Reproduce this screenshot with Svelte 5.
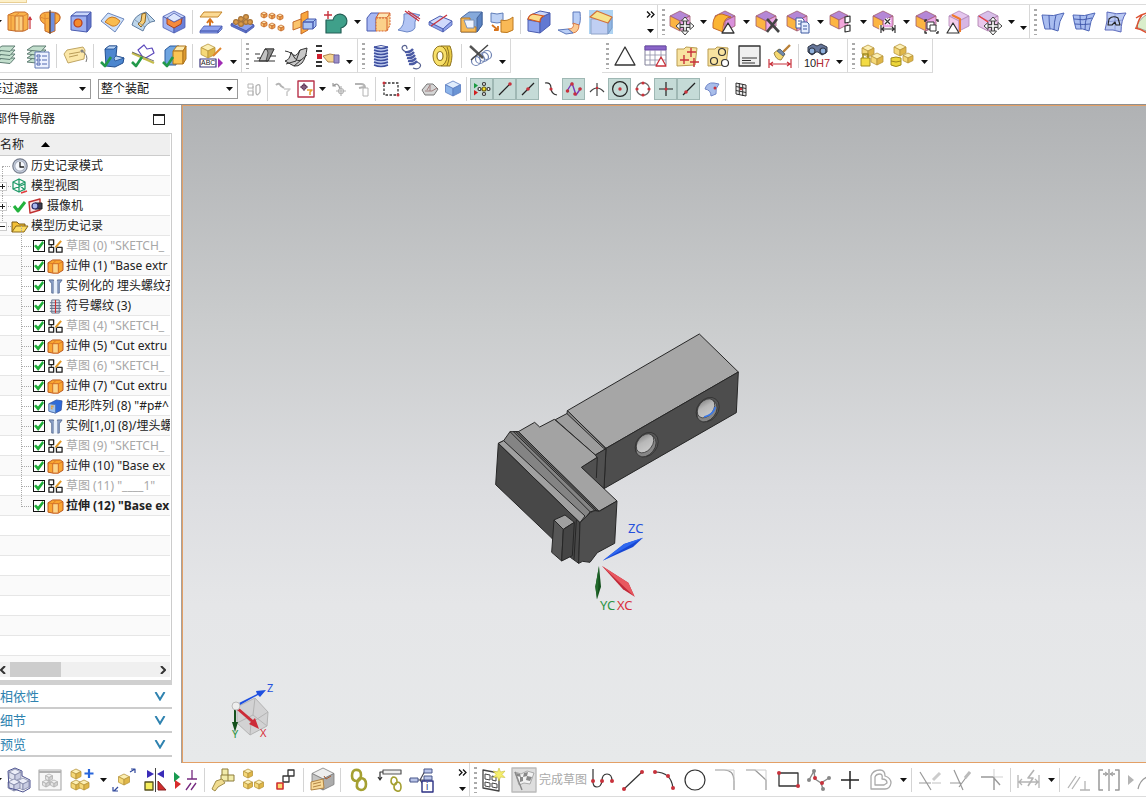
<script>
  const ink = '#333'
  const gray = '#b4b4b4'
  const red = '#c8323c'
  const navy = '#4a5cb0'
  const rust = '#c46a2a'

  // every icon is a list of [path, fill, stroke, stroke width]
  const line = (d, stroke = ink, w = 1.2) => [d, 'none', stroke, w]
  const dot = (x, y, r, fill = red, stroke = 'none') => [
    `M${x - r} ${y}a${r} ${r} 0 1 0 ${2 * r} 0a${r} ${r} 0 1 0 ${-2 * r} 0z`,
    fill,
    stroke,
    1.2
  ]
  const cube = (x, y, s, top, left, right, edge) => [
    [`M${x} ${y}l${s} ${s / 2}l${-s} ${s / 2}l${-s} ${-s / 2}z`, top, edge, 0.8],
    [`M${x - s} ${y + s / 2}l${s} ${s / 2}v${s}l${-s} ${-s / 2}z`, left, edge, 0.8],
    [`M${x + s} ${y + s / 2}l${-s} ${s / 2}v${s}l${s} ${-s / 2}z`, right, edge, 0.8]
  ]
  const blueCube = (x, y, s) => cube(x, y, s, '#c9d6fa', '#a3b5f2', '#6b80d8', navy)
  const orangeCube = (x, y, s) => cube(x, y, s, '#fde6b4', '#fbc878', '#f0a050', rust)
  const yellowCube = (x, y, s) => cube(x, y, s, '#fcefb4', '#f5d878', '#dfb648', '#b8963c')
  const syncCube = cube(11, 1, 10, '#b487d6', '#fcb542', '#eba6e6', '#a05a70')
  const paleCube = cube(11, 1, 10, '#d8bfea', '#eac8ec', '#f0c9ee', '#a87aa8')
  const move = [
    line('M16 9v14M9 16h14', '#444', 4),
    line('M16 10v12M10 16h12', '#fff', 1.6),
    ['M16 7l3.500 4h-7zM16 25l3.500-4h-7zM7 16l4-3.500v7zM25 16l-4-3.500v7z', '#fff', '#444', 1]
  ]
  const check = line('M1 18l4 4 6-9', '#22994a', 2.6)
  const layers = [16, 12, 8, 4].map(y => [
    `M1 ${y + 2}l6-4h13l-5 5.500z`,
    '#c3dfcd',
    '#5f7d73',
    1
  ])
  const folder = ['M2 5h7l2-2 11 1-2 17-18 1z', '#f8e3a0', '#b99c50', 1]

  const icons = {
    extrude: [
      ['M1 5l7-3h10l3 2v15l-4 2H8l-7-1z', '#f9b34b', rust, 1],
      ['M8 6h8v15H8z', '#fcd083', rust, 1],
      line('M1 5l7 1 4-3M16 6l5-2M4 6v14M12 7v13', '#e08a35', 1),
      line('M23 7v12M21.500 10L23 7l1.500 3', red)
    ],
    revolve: [
      ['M12 2Q2 2 2 7q0 5 5 7v7l5 2z', '#f9ad42', rust, 1],
      ['M12 2q10 0 10 5 0 5-5 7v7l-5 2z', '#6d8fdf', rust, 1],
      ['M17 3q5 1 5 4 0 5-5 7z', '#f9ad42', rust, 1],
      line('M7 4v15M2 7q5 3 10 1', '#e08a35', 1),
      line('M12 0v24', ink, 1)
    ],
    block: [
      ['M2 6l5-4h15l-4 4z', '#c9d6fa', navy, 1],
      ['M2 6h16v16L2 20z', '#9daff0', navy, 1],
      ['M18 6l4-4v15l-4 5z', '#6478cc', navy, 1],
      dot(9, 13, 4, '#f58a2c', '#b63c1c')
    ],
    emboss: [
      ['M1 11l7-8 16 6-9 13z', '#cfe1fa', '#6d88bd', 1],
      ['M5 12q3-5 7-5t8 4q-3 6-8 5z', '#f9bb4e', '#c97820', 1]
    ],
    bend: [
      ['M1 15q2-10 14-13l9 9q-9 1-12 10z', '#bed6ea', '#607da0', 1],
      ['M11 4l4-1-1 9-4 5-3-3 3-3z', '#f8ce77', '#8b6420', 1],
      line('M4 10l10 7M15 3l4 10', '#7892ad', 0.8)
    ],
    pocket: [
      ...blueCube(12, 1, 11),
      ['M5 8l7 4 8-4-1 6-7 4-7-4z', '#f58a3c', '#a84020', 1],
      ['M5 8l7-5 8 5-8 4z', '#dde7fd', navy, 0.8]
    ],
    offset: [
      ['M5 2h18l-4 5H1z', '#fbd992', '#c4862a', 1],
      line('M11 19v-9M8 13l3-4 3 4', '#d8741c', 2),
      ['M5 16h18l-4 5H1zM1 21h18v2H1zM19 21l4-5v3l-4 4z', '#8ea2ee', navy, 0.8]
    ],
    pattern: [
      ['M1 14l8-4 15 5-8 6z', '#8ea2ee', navy, 1],
      ['M1 14v2l15 7v-2zM16 23l8-6v-2l-8 6z', '#5f74cc', navy, 0.8],
      ...[[6, 12], [11, 9], [16, 7], [11, 14], [16, 12], [20, 12]].map(([x, y]) =>
        dot(x, y, 2.4, '#d99a4a', '#a87438')
      )
    ],
    array: [[3, 2], [11, 3], [19, 4], [3, 11], [11, 13], [20, 15]].flatMap(([x, y]) =>
      orangeCube(x, y, 3)
    ),
    mirror: [
      ['M9 4l7-3v19l-7 4z', '#f9a63c', rust, 1],
      ['M1 12l8-3v8l-8 3z', '#fbc46c', rust, 1],
      ['M11 12l4-3h9l-3 3zM11 12h10v7H11zM21 12l3-3v7l-3 3z', '#a8c3f5', navy, 1]
    ],
    unite: [
      ['M3 10h7a7 7 0 1 1 8 8v5H3z', '#3fa08a', '#245f56', 1.2],
      line('M5 1v8M1 5h8', red, 1.4)
    ],
    trim: [
      ['M1 8l4-5h8l-3 5v13H1z', '#a9b9f3', navy, 1],
      ['M10 8l3-5h11l-3 5z', '#fde6b4', '#d6612a', 1],
      ['M10 8h11l3-5v12l-3 6H10z', '#fbd18a', 'none', 0],
      ['M10 8h11l3-5v12l-3 6H10z', 'none', '#d6612a', 1, '2 1'],
      line('M21 8v13', '#d6612a', 1)
    ],
    cutSheet: [
      ['M7 4q9-2 16 1-6 4-5 10t-8 7L1 20q7-3 6-16z', '#b3c5f4', '#6b86c6', 1],
      line('M8 1l14 10M11 1l12 8', red, 1.2)
    ],
    split: [
      ['M1 12l11-6 12 5-9 8z', '#cfdafb', navy, 1],
      ['M1 12v3l14 7v-3zM15 22l9-7v-4l-9 8z', '#92a7ec', navy, 0.8],
      line('M3 16L19 5', red, 1.3)
    ],
    shell: [
      ['M2 8l8-6h13v13l-5 7H2z', '#85a9db', '#4d6ea8', 1],
      ['M18 8l5-6v13l-5 7z', '#5a83c3', '#45659a', 1],
      ['M2 8h9v6l-3 2 9 1v5H2z', '#f7ba56', '#b87824', 1],
      ['M5 10h10v8H8z', '#eef4ff', '#7b90b4', 1]
    ],
    wrap: [
      ['M1 3q6 2 12 0v9q-6 2-12 0z', '#bed2f5', '#5f7db8', 1],
      ['M11 10q6 2 12-3v13q-6 4-12 2z', '#f9b956', '#bd7920', 1],
      line('M2 15l6 5M8 16v4H4', '#d8741c', 1.8)
    ],
    blend: [
      ['M1 9v12l12 2V11z', '#90a5ee', navy, 1],
      ['M13 12q0-5 4-6l6-3v12l-10 8z', '#6279d2', navy, 1],
      ['M1 9q1-4 5-5l7-3 10 2-6 3q-4 1-4 6L1 10z', '#c9d6fa', navy, 1],
      ['M1 9q1-4 5-5l11 2q-4 1-4 6z', '#fbdc8b', '#d6551c', 1.2]
    ],
    bridge: [
      ['M15 2l7 0q1 10-1 13l-6-1z', '#b9cef6', '#5d78bb', 1],
      ['M10 19q7 0 5-6l6 2q0 7-6 8z', '#fbcb94', '#d87a48', 1],
      ['M0 20l10-1 5 4-7 1z', '#b9cef6', '#5d78bb', 1]
    ],
    chamferEdge: [
      ['M0 0h24v24H0z', '#aed3f2', 'none', 0],
      ['M2 9h17v15H2z', '#c0cff3', '#8fa3c8', 1],
      ['M19 13l4-6v11l-4 6z', '#8fb6e4', '#7d9ac6', 1],
      ['M1 7l7-6 15 6-4 6z', '#f6e48d', '#d2703a', 1.2]
    ],
    moveFace: [...syncCube, ...move],
    replaceFace: [
      ...cube(13, 1, 10, '#b487d6', '#f0b3ee', '#d991dc', '#a05a70'),
      ['M1 18v-5Q2 4 10 4l9 3q-7 0-8 10v5z', '#fbb433', rust, 1],
      ['M16 13l6 10H10z', '#fff', ink, 1.3]
    ],
    deleteFace: [...syncCube, line('M12 9l12 13M22 9L12 22', '#444', 2.6)],
    copyFace: [
      ...syncCube,
      ['M10 8h6l2 2v8h-8z', '#fff', '#3f5aa0', 1],
      ['M15 12h6l2 2v9h-8z', '#e7efff', '#3f5aa0', 1],
      line('M12 11h4M12 14h3M17 16h4M17 19h4', '#3f5aa0', 1)
    ],
    patternFace: [
      ...cube(10, 1, 9, '#b487d6', '#fcb542', '#f3a7dc', '#a05a70'),
      ['M16 7l5-1v6l-5 1zM16 16l5-1v6l-5 1z', '#fff', ink, 1.2]
    ],
    dimensionFace: [
      ...syncCube,
      line('M9 15v8M23 15v8M10 19h12M13 9l5 5M18 9l-5 5', '#fff', 3.4),
      line('M9 15v8M23 15v8M10 19h12M12 17l-2 2 2 2M20 17l2 2-2 2', ink, 1.2),
      line('M13 9l5 5M18 9l-5 5')
    ],
    groupFace: [
      ...syncCube,
      ['M12 12h7v7h-7z', '#fff', ink, 1],
      ['M15 15h6v6h-6z', '#fff', ink, 1],
      line('M10 12v-2h2M21 10h2v2M10 21v2h2M23 21v2h-2', ink, 1.4)
    ],
    offsetFace: [
      ...cube(13, 1, 10, '#e4c6ee', '#f3cdeb', '#d7b6e4', '#b087b8'),
      line('M6 5l8 4v13', '#f07a2c', 2),
      ['M7 13l6 10H1z', '#fff', ink, 1.2]
    ],
    moveEdge: [...paleCube, line('M2 6l9 6', '#e83c3c', 1.4), ...move],
    patch: [
      ['M1 5q12 2 22-2-5 8-6 18-6-3-13-2Q2 12 1 5z', '#a9bdf0', '#4e66b8', 1],
      line('M8 5q0 7 1 14M15 5q-2 7-2 15', '#3c54a8', 0.9)
    ],
    mesh: [
      ['M1 5q12 2 22-2-5 8-6 18-6-3-13-2Q2 12 1 5z', '#a9bdf0', '#4e66b8', 1],
      line('M8 5q0 7 1 14M15 5q-2 7-2 15M2 9q9 2 18-1M3 14q9 1 15 0', '#3c54a8', 0.9)
    ],
    loopSheet: [
      ['M4 2q10 3 19 1-5 7-5 19-8-3-16-2 3-9 2-18z', '#bac9f3', '#5a68bc', 1],
      line('M3 12l17-2M12 3v18', '#8090d0', 0.8),
      line('M5 15l1-6q4-4 9-1l2 7h-4l-1-3-3 3z', '#222', 1.1)
    ],
    sweep: [
      ['M2 17Q8 4 20 2l4 2-9 18z', '#d9eecb', '#888', 0.8],
      line('M2 8q8-6 20-6M1 18q6 1 12 5M8 5q-5 7-5 13', '#dc5030', 1.4)
    ],

    layers,
    layerList: [
      ...layers,
      ['M9 8h14v16H9z', '#edf2ff', '#6078b4', 1],
      line('M11 11h3v2h-3zM11 15h3v2h-3zM11 19h3v2h-3zM16 12h5M16 16h5M16 20h5', '#5068b0', 1)
    ],
    tag: [
      ['M1 10l3-4 16-3 2 3-1 9-16 4z', '#fbe7a8', '#c0a664', 1],
      line('M6 10l11-2M6 13l9-2', '#b99c58', 1),
      line('M19 7q7 4 4 11', '#777', 1),
      dot(19, 7, 1, '#fff', '#777')
    ],
    fixBlock: [
      ['M5 5l4-3h8l-1 10 8 2-1 5-8 4-9-1z', '#4c86cf', '#234f90', 1],
      ['M5 5l4-3h8l-3 3zM14 14l2-2 8 2-9 3z', '#b9d5f6', '#234f90', 0.8],
      check
    ],
    paintBlock: [
      ['M7 6l6-5 3 4 5-1 2 5-10 6z', '#fff', '#5b49bb', 1.2],
      line('M1 9l22 10', '#c4bc4c', 2.4),
      line('M1 8l22 9', '#555', 0.8),
      check
    ],
    checkBlocks: [
      ['M3 6l5-4h9l-3 4v15H3z', '#6ea4e0', '#2a5a9c', 1],
      ['M11 7l4-5h9l-3 5z', '#fdebb0', '#ae741c', 1],
      ['M11 7h10v13H11z', '#fbc453', '#ae741c', 1],
      ['M21 7l3-5v13l-3 5z', '#dc9a30', '#ae741c', 1],
      check
    ],
    annotate: [
      ...yellowCube(9, 0, 7),
      ['M1 15h16v8H1z', '#fff', '#3b357e', 1.2],
      ['M19 14l5 5-5 5z', '#a02cb4', 'none', 0],
      line('M14 12l8-8', '#e0852c', 2)
    ],
    section: [
      ['M6 17l6-12h9l-6 12z', '#c2c2c2', '#333', 1],
      ['M12 5q3 0 3 4l-2 8h2l6-12z', '#8d8d8d', '#333', 0.8],
      line('M2 10h5M1 17h21M17 12h6M4 14h4', '#333', 1.2)
    ],
    sectionCurve: [
      ['M1 17q5-1 6-9 4 8 9-2l7-2q-1 10-5 15-4 4-8 3z', '#c8c8c8', '#333', 1],
      line('M1 7q7 1 9 6 3 5 7 3M2 20l10-3 4-11M10 22l7-6 6-5', '#333', 1)
    ],
    handPick: [
      line('M1 2h6M1 7h6M1 18h6M1 22h6', ink, 2),
      ['M2 10h5v5H2z', '#d02030', 'none', 0],
      ['M8 12l7-2 5 1v7h-7z', '#f5d48f', '#ad8650', 1],
      ['M19 11h5v8h-5z', '#9c8fc8', '#6c60a0', 1]
    ],
    spring: [
      ['M5 3h14v19H5z', '#c6d2f2', 'none', 0],
      ...[3, 6, 9, 12, 15, 18, 21].map(y => line(`M5 ${y}q7 3 14 0`, '#3f50a0', 1.4)),
      line('M5 3q7-3 14 0', '#3f50a0', 1)
    ],
    coil: [
      line('M7 5Q7 0 3 2q-3 3 3 6M17 18q5 2 3 5t-7 1', '#55608f', 1.2),
      ...[6, 9, 12, 15, 18].map((y, i) => line(`M${5 + i} ${y + 2}q5 1 8-3`, '#4a5aa4', 2.2))
    ],
    ring: [
      ['M10 2h9q4 9 0 20h-9z', '#e9cc46', '#8f7421', 1],
      ['M2 12a7 10 0 1 0 14 0a7 10 0 1 0-14 0z', '#f8e06a', '#8f7421', 1],
      ['M6 12a3 4.500 0 1 0 6 0a3 4.500 0 1 0-6 0z', '#fff', '#8f7421', 1.2],
      line('M16 3q4 9 0 19', '#8f7421', 1)
    ],
    springTools: [
      ...[[8, 17], [12, 15], [16, 13], [19, 11]].map(([x, y]) => dot(x, y, 4.5, 'none', '#7084b4')),
      line('M2 2l13 12', '#555', 2.4),
      line('M20 1L3 16', '#444', 1.4)
    ],
    triangle: [['M12 3l10 18H2z', 'none', ink, 1.3]],
    table: [
      ['M1 2h21v19H1z', '#fff', '#808098', 1],
      ['M1 2h21v4H1z', '#8a65c8', '#6a4ba8', 1],
      line('M1 11h21M1 16h21M6 6v15M11 6v15M17 6v15', '#9090a8', 0.8),
      ['M17 13l5 9H12z', '#fff', red, 1.3]
    ],
    folderPoints: [folder, line('M16 4v9M12 8h9M9 11v9M5 16h9M19 14v9M15 18h9', red, 1.4)],
    folderRings: [
      folder,
      dot(16, 8, 3.5, 'none', ink),
      dot(8, 17, 3.5, 'none', ink),
      dot(19, 19, 3.5, '#fff', ink)
    ],
    note: [['M2 2h21v20H2z', '#efefef', ink, 1.3], line('M5 14h15M5 16.500h9M5 19h13', ink, 1)],
    brush: [
      line('M22 1l-7 7', '#b98038', 2.4),
      ['M6 9l5-4 6 5-4 6q-5 0-7-7z', '#f5d870', '#9a8544', 1],
      ['M12 5l5 5-2 2-6-5z', '#7088a8', '#4d6078', 0.8],
      line('M1 15v9M23 15v9M2 20h20M5 18l-3 2 3 2M19 18l3 2-3 2', red, 1.2)
    ],
    fits: [
      ['M3 3l5-3 4 2 4-2 6 3v5l-5 3-4-3h-2l-4 3-4-3z', '#66769a', '#303848', 1],
      dot(7, 7, 3, '#8fb0dc', '#303848'),
      dot(18, 7, 3, '#8fb0dc', '#303848')
    ],
    lockBoxes: [
      ...yellowCube(9, 1, 6),
      ...yellowCube(18, 9, 6),
      ['M2 14h9v8H2z', '#f3db44', '#a08a20', 1],
      line('M4 14v-4h5v4', '#a08a20', 1.6)
    ],
    stackBoxes: [
      ...yellowCube(10, 0, 6),
      ...yellowCube(18, 9, 5),
      ['M1 14q5-2 10 0v7q-5 3-10 0z', '#ecd53a', '#a08a20', 1],
      line('M1 17q5 2 10 0', '#a08a20', 1)
    ],

    assembly: [
      ...cube(8, 1, 6, '#eceef8', '#dee1ee', '#c8cce2', '#7e84a4'),
      ...cube(16, 10, 6, '#eceef8', '#dee1ee', '#c8cce2', '#7e84a4'),
      ...cube(7, 11, 6, '#eceef8', '#dee1ee', '#c8cce2', '#7e84a4'),
      line('M1 3l7-3 7 3v5l8 4v8l-7 4-6-2-8-2z', '#4c5290', 1)
    ],
    assemblyView: [
      ['M1 2h22v20H1z', '#f6f6f6', '#b0b0b0', 1.2],
      line('M1 4h22', '#b0b0b0', 2),
      ...cube(11, 6, 3.5, '#f2f2f2', '#e4e4e4', '#d0d0d0', '#b0b0b0'),
      ...cube(8, 12, 3.5, '#f2f2f2', '#e4e4e4', '#d0d0d0', '#b0b0b0'),
      ...cube(16, 12, 3.5, '#f2f2f2', '#e4e4e4', '#d0d0d0', '#b0b0b0')
    ],
    addComponent: [
      ...yellowCube(7, 1, 5),
      ...yellowCube(7, 12, 5),
      ...yellowCube(15, 12, 5),
      line('M20 1v9M15.500 5.500h9', '#2866dc', 2.2)
    ],
    moveComponent: [
      ...yellowCube(12, 6, 5.5),
      line('M18 4l5-3M19 1h4v4M6 19l-4 4M1 19v4h5', '#30489c', 1.2)
    ],
    mirrorComponent: [
      ['M4 2l7 4-7 4zM21 2l-7 4 7 4z', '#3a2cb8', 'none', 0],
      line('M12.500 0v24', '#444', 1),
      ['M2 14h8v8H2z', '#f5ee5c', '#55501c', 1.3],
      ['M15 13l8 9h-8z', '#d02c2c', '#882020', 1]
    ],
    constraints: [
      ['M0 4l6 5-6 5z', '#189a50', 'none', 0],
      ['M1 12l6 4-6 5z', '#d82c2c', 'none', 0],
      line('M18 2v9M13 11h10M12 22l5-7M17 22l5-7', '#762a80', 1.3)
    ],
    joint: [
      ['M11 1h6v6h6v6h-13V7h1z', '#f2ecaa', '#8c7d3a', 1],
      line('M11 7h6v6', '#8c7d3a', 1),
      ['M1 21l4-8 6-2 3 4-7 4-3 4z', '#f0dc90', '#a08c48', 1]
    ],
    componentPattern: [
      ...yellowCube(6, 1, 4.5),
      ...yellowCube(6, 12, 4.5),
      ...yellowCube(17, 12, 4.5)
    ],
    sequence: [
      ['M15 2h6v6h-6zM10 8h6v6h-6z', '#fff', ink, 1.3],
      ['M4 15h6v6H4z', '#fcd870', '#d03030', 1.6]
    ],
    assemblyBox: [
      ...cube(13, 0, 11, '#eeeeee', '#c4c4c4', '#acacac', '#7c7c7c'),
      ['M1 14l12-3 1 9-13 2z', '#f8d998', '#b08344', 1],
      line('M3 16l8-2M3 19l8-2', '#b08344', 1),
      line('M14 8l2 3 5-3', '#a85a2c', 1)
    ],
    chain: [
      ['M8 2q6-1 6 5t-4 6q-5 0-5-5t3-6z', 'none', '#a5a032', 2.6],
      ['M13 10q6 0 6 6t-5 6q-5-1-4-6t3-6z', 'none', '#a5a032', 2.6]
    ],
    linkPart: [
      ['M5 2h18v4H5z', '#eee', '#555', 1.2],
      line('M5 4H2v8M0 9l2 3 2-3', ink, 1.2),
      ['M15 9q4 0 4 4t-3 4q-3-1-3-4t2-4zM19 14q4 0 4 5t-4 4q-3-1-3-4t3-5z', 'none', '#a5a032', 1.6]
    ],
    assemblyInfo: [
      line('M0 12h11L16 3M11 12l5 7M11 12h5', '#445', 1.2),
      ['M1 10h8v4H1zM15 1h8v4h-8zM15 8h8v4h-8z', '#b9c4e8', '#48568a', 1],
      ['M13 13h11v11H13z', '#fff', '#2c3184', 1.4]
    ],
    sketch: [
      ['M2 2l16 3v18L2 20z', '#fff', '#444', 1.3],
      line('M4 6l5 1v5l-5-1zM11 8l4 1v4l-4-1zM4 14l5 1v4l-5-1zM11 15l5 1v4l-5-1z', '#444', 1),
      ['M18 0l1.500 4L24 3l-3 3.500 3 3-4.500-.5L18 13l-1.500-4-4.500.5 3-3-3-3.500 4.500 1z', '#f5ee6c', '#c8bc40', 0.6]
    ],
    finish: [
      ['M0 0h24v24H0z', '#dedede', '#bbb', 1.4],
      ['M3 4l6 2 6-3 7 2-4 11-6-1-5 2z', '#f2f2f2', '#999', 0.8],
      ['M4 5l4 1 1 3-4-1zM12 5l4-1-1 4-4 1zM8 9l3 0 0 4-3 1zM15 8l5 1-2 4-4-1z', '#888', 'none', 0],
      line('M3 4l7 18', '#888', 1.4)
    ],
    profile: [
      line('M3 1v13q0 5 4 5t5-6q0-7 5-7t5 7'),
      dot(3, 13, 2),
      dot(12, 13, 2),
      dot(22, 13, 2)
    ],
    line: [line('M3 21L21 4'), dot(3, 21, 2), dot(21, 4, 2)],
    arc: [line('M3 4q16 0 18 16'), dot(3, 4, 2), dot(16, 8, 2), dot(21, 20, 2)],
    circle: [dot(12, 12, 10, 'none', ink)],
    fillet: [line('M1 2h9q10 0 10 11v9', '#999', 1.2), line('M10 2h10v11', '#ccc', 1)],
    chamfer: [line('M1 2h9l11 10v10', '#999', 1.2), line('M10 2h11v10', '#ccc', 1)],
    rectangle: [line('M3 5h19v13H3z', ink, 1.3), dot(3, 5, 2), dot(22, 18, 2)],
    spline: [
      line('M2 12l5-9 1 8 6 4 8-5M14 15l2 6', '#888', 1.4),
      dot(2, 12, 2, '#888'),
      dot(7, 3, 2, '#888'),
      dot(8, 10, 2),
      dot(15, 15, 2),
      dot(16, 21, 2, '#888'),
      dot(22, 10, 2, '#888')
    ],
    point: [line('M12 3v18M3 12h18', '#222', 1.5)],
    offsetCurve: [
      line('M2 21V8q2-6 9-6 5 0 5 6 6 2 6 7-1 6-6 6z', '#aaa', 1.3),
      line('M6 17V9q1-3 5-3 3 0 2 5 5 0 5 4l-3 2z', '#aaa', 1.3)
    ],
    trimCurve: [
      line('M2 4l11 18M1 15h12', '#999'),
      line('M14 15h9', '#999', 0.6),
      line('M15 12l7-7', '#ccc', 3)
    ],
    extendCurve: [line('M5 2l9 20M1 15h11M10 19L21 4', '#999'), line('M16 10l5-6', '#bbb', 3)],
    makeCorner: [line('M1 9h12l7 8M14 9v13', '#999', 1.4), line('M14 1v8h9', '#bbb', 0.7)],
    rapidDimension: [
      line('M1 7v13M22 7v13M2 14h19M5 11l-3 3 3 3M18 11l3 3-3 3', gray, 1.3),
      line('M17 2l-6 8h5l-5 8', gray, 1.6)
    ],
    geometric: [line('M2 20L10 8M6 21l8-12', gray, 1.3), line('M19 13v9M14 22h10', gray, 1.3)],
    symmetric: [
      line('M6 2H2v20h4M18 2h4v20h-4M6 6h4M18 6h-4', '#999', 1.5),
      line('M12 1v22', '#777', 1),
      line('M8 4l3 2-3 2M16 4l-3 2 3 2', '#999', 1)
    ],
    more: [['M0 7l6 5-6 5z', gray, 'none', 0], line('M10 21q2-9 9-12h5', '#999', 1.2)]
  }

  // icons of the selection bar and the tree sit on a 16 unit grid
  const small = {
    related: [
      line('M2 3h5v4H2zM2 10h5v4H2zM7 5v10', gray, 1),
      line('M10 5q4-3 4 1v5q-3 5-4 1z', gray, 1.3)
    ],
    filterReset: [line('M1 4q3-3 5 1l3 2', gray, 2), line('M9 8h6l-3 3v4', '#ccc', 1.6)],
    filterPick: [
      ['M0 0h16v16H0z', '#fff', '#b8324a', 1.4],
      line('M6 2v8M2 6h8', '#5b2c50', 1),
      dot(6, 6, 2.2, 'none', '#5b2c50'),
      line('M9 9h5l-2 2v3', '#e6a030', 1.6)
    ],
    snapPoint: [
      line('M2 5q5-5 7 3M2 2v3h3', '#999', 1.2),
      line('M10 5v10M5 10h10', gray, 1.2),
      dot(10, 10, 2.5, 'none', gray)
    ],
    snapOrigin: [line('M1 3h6q4 0 4 4M5 7l5-1', gray, 2), line('M9 7h5v8H9z', gray, 1)],
    marquee: [
      ['M1 2h14v12H1z', 'none', ink, 1.3, '2.5 1.5'],
      dot(1, 2, 1.5),
      dot(15, 14, 1.5)
    ],
    solid: [
      ['M0 9l5-6h6l5 5-4 6H3z', '#d4d4d4', '#777', 1],
      line('M5 9l3-5M3 10h7l5-3M8 4v6', '#a08080', 1)
    ],
    face: cube(8, 0, 7.5, '#e0edfc', '#8cb4ea', '#6a94d4', '#5a7cc0'),
    allSnap: [
      ['M0 2l4 2.500-4 3z', '#1a9a40', 'none', 0],
      ['M0 9l4 2.500-4 3z', '#d02020', 'none', 0],
      ...[[10, 3], [10, 13], [5.5, 8], [14.5, 8]].map(([x, y]) => dot(x, y, 1.5, '#fff', ink)),
      dot(10, 8, 2, '#f5e020', '#706010')
    ],
    endpoint: [line('M2 14L13 3', '#222', 1.2), dot(13, 3, 1.8)],
    midpoint: [line('M2 14L14 2', '#222', 1.2), dot(8, 8, 1.8)],
    control: [line('M2 2q6-1 6 5t6 7', ink, 1.2), dot(8, 8, 1.6)],
    pole: [
      line('M1 10l5-8 4 12 5-7', '#7838b8', 1.4),
      dot(1.5, 10, 1.8),
      dot(6, 3, 1.8),
      dot(9, 13, 1.8),
      dot(14, 8, 1.8)
    ],
    intersection: [line('M1 11q7-8 14 0M8 2v13', '#444', 1.2), dot(8, 7, 1.2)],
    center: [dot(8, 8, 7.4, 'none', '#222'), dot(8, 8, 1.7)],
    quadrant: [
      dot(8, 8, 6.4, 'none', '#666'),
      dot(8, 2, 1.6),
      dot(8, 14, 1.6),
      dot(2, 8, 1.6),
      dot(14, 8, 1.6)
    ],
    existing: [line('M8 1v14M1 8h14', '#222', 1.2), dot(8, 8, 1.5)],
    onCurve: [line('M2 14L14 2', '#222', 1.2), dot(5, 11, 1.8)],
    onFace: [['M1 8q2-7 9-6l5 1q-4 4-3 10l-5 2q0-6-6-7z', '#a8bdea', '#7086c8', 1], dot(11, 7, 1.5)],
    snapGrid: [
      ['M3 2l10 2v11L3 13z', '#eee', ink, 1],
      line('M6.300 2v12M9.700 3v12M3 5.500l10 2M3 9.500l10 2', ink, 1),
      dot(8, 8, 1.3)
    ],

    clock: [
      dot(8, 8, 7.2, '#c9d2e3', '#767d8c'),
      dot(8, 8, 5.2, '#f5f8fd', '#a9b0be'),
      line('M8 4v5h4', '#222', 1.3)
    ],
    views: [
      line('M1 4l6-3 6 3v7l-6 3-6-3zM1 4l6 3 6-3M7 1v13M1 11l12-5M7 7l6 5', '#209a68', 1.3),
      line('M9 15l6-2', '#e23c3c', 1.6)
    ],
    camera: [
      ['M1 4l11-3v11L2 15z', '#fbe3e3', '#c03030', 1.4],
      ['M7 5h7v6H7z', '#3c3c50', '#222', 1],
      dot(7, 8, 3, '#a9b8ee', '#30306c')
    ],
    tick: [line('M2 8l4 5L13 4', '#23b23c', 3)],
    folder: [
      ['M0 14V4h5l2 2h6v3', '#f3bf35', '#7a5a14', 1],
      ['M0 14l4-6h12l-4 6z', '#fbdb62', '#8b6818', 1]
    ],
    sketchNode: [
      ['M1 1h5v5H1zM1 9h5v5H1zM9 9h6v5H9z', '#fff', '#222', 1.4],
      line('M8 9l6-7', '#e39a28', 2.2),
      line('M3.500 6v3', '#222', 1)
    ],
    extrudeNode: [
      ['M0 4l5-3h8l3 2v9l-5 3H5l-5-1z', '#f9a632', '#b8541a', 1],
      ['M5 5h6v10H5z', '#fcd48a', '#d06a24', 1],
      line('M5 5L0 4M11 5l5-2M5 5l3-3', '#d06a24', 0.8)
    ],
    holeNode: [
      ['M1 1h5v14H4V5zM15 1h-5v14h2V5z', '#8aa0c8', '#5a6e94', 1],
      ['M6 2h4v13H6z', '#e8f0fb', 'none', 0]
    ],
    threadNode: [
      ['M4 1h8v14H4z', '#dfe5ef', '#68748c', 1],
      line('M2 4h12M2 7h12M2 10h12M2 13h12', '#68748c', 1.2),
      line('M8 1v14', '#d03030', 1.2)
    ],
    arrayNode: [
      ['M1 5l8-4 6 1-1 10-6 3-7-2z', '#2f6ad8', '#274a9c', 0.8],
      ['M1 5l7 1v9l-7-2z', '#9fc4f2', '#5574a8', 0.8],
      ['M3 7h3v2H3zM6 11H3V9z', '#e8a03c', 'none', 0]
    ]
  }

  // '|' separator, 'v' drop-down arrow, 'w' arrow at the bar's foot, '»' overflow
  const modelBar = 'v extrude revolve block emboss bend pocket | offset pattern array mirror unite v trim cutSheet split shell wrap | blend bridge chamferEdge »'
  const syncBar = 'moveFace v replaceFace v deleteFace copyFace v patternFace v dimensionFace v groupFace offsetFace moveEdge v w'
  const surfaceBar = 'patch mesh loopSheet sweep'
  const layerBar = 'layers layerList | tag | fixBlock paintBlock checkBlocks | annotate w'
  const sectionBar = 'section sectionCurve handPick w'
  const springBar = 'spring coil ring | springTools w'
  const drawBar = 'triangle table folderPoints folderRings note brush | fits w'
  const boxBar = 'lockBoxes stackBoxes w'
  const assemblyBar = 'v assembly assemblyView addComponent v moveComponent mirrorComponent constraints | joint componentPattern sequence | assemblyBox | chain linkPart assemblyInfo »'
  const sketchBar = 'sketch finish profile line arc circle fillet chamfer rectangle spline point offsetCurve v | trimCurve extendCurve makeCorner | rapidDimension v | geometric symmetric more'
  const selectionBar = 'related | filterReset filterPick v snapPoint snapOrigin | marquee v | solid face | allSnap endpoint midpoint control pole intersection center quadrant existing onCurve onFace | snapGrid'

  const labels = { finish: '完成草图' }
  const iconText = {
    annotate: [[2, 21, 7, 'ABC', '#222']],
    fits: [[-1, 23, 11, '10', '#222'], [11, 23, 11, 'H7', '#b02a30']],
    assemblyInfo: [[17, 22, 10, 'i', '#2c3184']]
  }

  let snaps = {
    allSnap: true,
    endpoint: true,
    midpoint: true,
    pole: true,
    center: true,
    existing: true,
    onCurve: true
  }

  let features = [
    { icon: 'sketchNode', name: '草图 (0) "SKETCH_', dim: true, on: true },
    { icon: 'extrudeNode', name: '拉伸 (1) "Base extr', on: true },
    { icon: 'holeNode', name: '实例化的 埋头螺纹孔', on: true },
    { icon: 'threadNode', name: '符号螺纹 (3)', on: true },
    { icon: 'sketchNode', name: '草图 (4) "SKETCH_', dim: true, on: true },
    { icon: 'extrudeNode', name: '拉伸 (5) "Cut extru', on: true },
    { icon: 'sketchNode', name: '草图 (6) "SKETCH_', dim: true, on: true },
    { icon: 'extrudeNode', name: '拉伸 (7) "Cut extru', on: true },
    { icon: 'arrayNode', name: '矩形阵列 (8) "#p#^', on: true },
    { icon: 'holeNode', name: '实例[1,0] (8)/埋头螺', on: true },
    { icon: 'sketchNode', name: '草图 (9) "SKETCH_', dim: true, on: true },
    { icon: 'extrudeNode', name: '拉伸 (10) "Base ex', on: true },
    { icon: 'sketchNode', name: '草图 (11) "____1"', dim: true, on: true },
    { icon: 'extrudeNode', name: '拉伸 (12) "Base ex', bold: true, on: true }
  ]

  const sections = ['相依性', '细节', '预览']
</script>

{#snippet glyph(shapes, grid, texts = [])}
  <svg class="glyph" class:tiny={grid === 16} viewBox="0 0 {grid} {grid}" aria-hidden="true">
    {#each shapes as [d, fill, stroke, width, dash]}
      <path {d} {fill} {stroke} stroke-width={width} stroke-dasharray={dash} />
    {/each}
    {#each texts as [x, y, size, text, fill]}
      <text {x} {y} {fill} font-size={size}>{text}</text>
    {/each}
  </svg>
{/snippet}

{#snippet caret()}
  <svg class="caret" viewBox="0 0 7 4" aria-hidden="true"><path d="M0 0h7L3.500 4z" /></svg>
{/snippet}

{#snippet bar(items, grip = true)}
  <div class="bar" role="toolbar">
    {#if grip}<span class="grip"></span>{/if}
    {#each items.split(' ') as item}
      {#if item === '|'}
        <span class="sep"></span>
      {:else if item === 'v'}
        <button class="drop" aria-label="options">{@render caret()}</button>
      {:else if item === 'w'}
        <button class="drop foot" aria-label="toolbar options">{@render caret()}</button>
      {:else if item === '»'}
        <button class="overflow" aria-label="more tools">
          <svg class="chevrons" viewBox="0 0 9 7" aria-hidden="true">
            <path d="M1 .5l3 3-3 3M5 .5l3 3-3 3" />
          </svg>
          {@render caret()}
        </button>
      {:else}
        <button class="tool" aria-label={item}>
          {@render glyph(icons[item], 24, iconText[item])}
          {#if labels[item]}<span>{labels[item]}</span>{/if}
        </button>
      {/if}
    {/each}
  </div>
{/snippet}

<div class="app">
  <header>
    <div class="strip"><span></span></div>
    <div class="row">
      {@render bar(modelBar, false)}
      {@render bar(syncBar)}
      {@render bar(surfaceBar)}
    </div>
    <div class="row second">
      {@render bar(layerBar, false)}
      {@render bar(sectionBar)}
      {@render bar(springBar)}
      <span class="gap"></span>
      {@render bar(drawBar)}
      {@render bar(boxBar)}
    </div>
    <div class="selection">
      <label class="combo filter">
        <select aria-label="选择过滤器"><option>没有选择过滤器</option></select>
        {@render caret()}
      </label>
      <label class="combo scope">
        <select aria-label="选择范围"><option>整个装配</option></select>
        {@render caret()}
      </label>
      {#each selectionBar.split(' ') as item}
        {#if item === '|'}
          <span class="sep"></span>
        {:else if item === 'v'}
          <button class="drop" aria-label="options">{@render caret()}</button>
        {:else}
          <button
            class="snap"
            class:on={snaps[item]}
            aria-label={item}
            aria-pressed={!!snaps[item]}
            on:click={() => (snaps[item] = !snaps[item])}>
            {@render glyph(small[item], 16)}
          </button>
        {/if}
      {/each}
    </div>
  </header>

  <main>
    <aside>
      <div class="title">
        <h1>部件导航器</h1>
        <button aria-label="最大化"></button>
      </div>
      <div class="panel">
        <button class="head">
          名称
          <svg viewBox="0 0 9 5" aria-hidden="true"><path d="M0 5h9L4.500 0z" /></svg>
        </button>
        <ul class="tree">
          <li class="root">{@render glyph(small.clock, 16)}历史记录模式</li>
          <li class="root"><i class="plus"></i>{@render glyph(small.views, 16)}模型视图</li>
          <li class="root">
            <i class="plus"></i>{@render glyph(small.tick, 16)}{@render glyph(small.camera, 16)}摄像机
          </li>
          <li class="root last"><i></i>{@render glyph(small.folder, 16)}模型历史记录</li>
          {#each features as feature}
            <li class="feature">
              <label class:dim={feature.dim} class:bold={feature.bold}>
                <input type="checkbox" bind:checked={feature.on} />
                {@render glyph(small[feature.icon], 16)}
                {feature.name}
              </label>
            </li>
          {/each}
        </ul>
        <div class="scroll">
          <button aria-label="向左"><svg viewBox="0 0 6 8"><path d="M5 0L1 4l4 4" /></svg></button>
          <span></span>
          <button aria-label="向右"><svg viewBox="0 0 6 8"><path d="M1 0l4 4-4 4" /></svg></button>
        </div>
      </div>
      {#each sections as section}
        <button class="section">
          {section}
          <svg viewBox="0 0 12 9" aria-hidden="true"><path d="M1.500 0L6 7.500 10.500 0" /></svg>
        </button>
      {/each}
    </aside>

    <section class="viewport" aria-label="model view">
      <svg class="part" viewBox="0 0 280 300">
        <defs>
          <linearGradient id="bore" x1="0" x2="1" y1="0" y2="0.6">
            <stop offset="0" stop-color="#7c7c7c" />
            <stop offset="0.5" stop-color="#b8b8b8" />
            <stop offset="1" stop-color="#c8c8c8" />
          </linearGradient>
        </defs>
        <g transform="scale(0.33333)" stroke="#262626" stroke-width="3" stroke-linejoin="round">
          <path fill="#a6a6a6" d="M262 272L658 42l117 114-397 229z" />
          <path fill="#4d4d4d" d="M378 385l397-229-6 122-397 228z" />
          <path fill="#9d9d9d" d="M226 299l36-19 116 106-32 19z" />
          <path fill="#8a8a8a" d="M262 272l-1 9 109 103 8 2z" />
          <path fill="#505050" d="M346 405l32-19-6 120-68-64z" />
          <path fill="none" d="M352 412l-3 62M304 441l48-29" />
          <path fill="#a3a3a3" d="M115 335l49-28 15 14 44-23 123 107 5 7-47 30 107 101-55 31z" />
          <path fill="#848484" d="M55 370l16-8 19-27 25 0 241 238-14-1-12 4-23 30-9 3z" />
          <path fill="#a0a0a0" d="M55 370l16-8 244 226-15 20z" />
          <path fill="#6f6f6f" d="M100 335l15 0 241 238-11-1z" />
          <path fill="none" d="M90 335l242 242M108 335l243 238" />
          <path fill="#484848" d="M55 370l245 238-4 122-25-18-55-57L47 494z" />
          <path fill="#4f4f4f" d="M300 608l32-31 13-5 13 2 53-31-7 127-52 28-22 29-22-3-12 6z" />
          <path fill="none" d="M289 600l-7 118" />
          <path fill="#a0a0a0" d="M222 600l33-15 28 22-33 21z" />
          <path fill="#565656" d="M222 600l28 28-5 95-30-26z" />
          <path fill="#454545" d="M250 628l33-21-6 100-32 16z" />
        </g>
        <g transform="scale(0.33333)" stroke="#2c2c2c" stroke-width="2">
          <ellipse cx="500" cy="374" rx="31" ry="40" fill="#555" transform="rotate(38 500 374)" />
          <ellipse cx="498" cy="378" rx="26" ry="36" fill="#868686" transform="rotate(38 498 378)" />
          <ellipse cx="495" cy="370" rx="22" ry="32" fill="url(#bore)" transform="rotate(38 495 370)" />
          <ellipse cx="683" cy="269" rx="31" ry="40" fill="#555" transform="rotate(38 683 269)" />
          <ellipse cx="681" cy="273" rx="26" ry="36" fill="#868686" transform="rotate(38 681 273)" />
          <ellipse cx="678" cy="265" rx="22" ry="32" fill="url(#bore)" transform="rotate(38 678 265)" />
          <path fill="none" stroke="#3a78e8" stroke-width="5" d="M672 291q28-6 34-30" />
        </g>
        <g transform="scale(0.33333)">
          <path fill="#1747d4" d="M368 722l64-50 57-19-30 28z" />
          <path fill="#2f68f0" d="M368 722l64-50 57-19z" />
          <path fill="#c02838" d="M366 738l79 50 19 42-35-22z" />
          <path fill="#e85860" d="M366 738l79 50 19 42z" />
          <path fill="#14501c" d="M357 738l-11 62 5 38 12-38z" />
          <path fill="#226a2c" d="M357 738l-2 62-4 38-5-38z" />
        </g>
        <text x="148" y="213" fill="#2450dc">ZC</text>
        <text x="120" y="290" fill="#2e9444">YC</text>
        <text x="137" y="290" fill="#d8303c">XC</text>
      </svg>

      <svg class="triad" viewBox="0 0 50 60">
        <g fill="#d2d2d3" stroke="#b4b4b4" stroke-width="1">
          <path d="M9 25l18-9 13 14-1 14-17 9L9 41z" />
          <path fill="none" d="M9 41l16-8 14 11M25 33l2-17M22 53l1-12 17-11M23 41L9 25" />
        </g>
        <path fill="#1d4fe0" d="M11 21l18-9-1-3 10-1-6 7-2-2-18 10z" />
        <path fill="#cc2c38" d="M11 26l14 12 2-2 4 11-10-5 2-2L9 28z" />
        <path fill="#14501c" d="M6 27h2v13h2l-3 10-3-10h2z" />
        <circle cx="8" cy="24" r="4" fill="#eee" stroke="#bbb" />
        <text x="39" y="10" fill="#2450dc">Z</text>
        <text x="32" y="55" fill="#d8303c">X</text>
        <text x="4" y="56" fill="#2e9444">Y</text>
      </svg>
    </section>
  </main>

  <footer class="row">
    {@render bar(assemblyBar, false)}
    {@render bar(sketchBar)}
  </footer>
</div>

<style>
  :global(body) {
    margin: 0;
    overflow: hidden;
  }

  .app {
    display: flex;
    flex-direction: column;
    height: 100vh;
    background: #fff;
    color: #222;
    font-family: 'Noto Sans', 'Noto Sans CJK SC', sans-serif;
    font-size: 12px;
    line-height: 20px;
  }

  button {
    padding: 0;
    border: none;
    background: none;
    color: inherit;
    font: inherit;
  }

  svg {
    display: block;
    flex: none;
  }

  .glyph {
    width: 24px;
    height: 24px;
    overflow: visible;
    stroke-linejoin: round;
  }

  .glyph.tiny {
    width: 16px;
    height: 16px;
  }

  .glyph text {
    font-family: 'Liberation Sans', sans-serif;
  }

  .caret {
    width: 7px;
    height: 4px;
    fill: #111;
  }

  /* toolbars */
  .strip {
    height: 4px;
    border-bottom: 1px solid #dcdcdc;
  }

  .strip span {
    display: block;
    width: 26px;
    height: 2px;
    background: #fdf0c8;
    border-right: 1px solid #e9cf94;
    border-bottom: 1px solid #e9cf94;
  }

  .row {
    display: flex;
    height: 34px;
    overflow: hidden;
  }

  .bar {
    display: flex;
    flex: none;
    align-items: center;
    box-sizing: border-box;
    height: 34px;
    border-right: 1px solid #d8d8d8;
    border-bottom: 1px solid #dcdcdc;
  }

  .row > .bar:first-child {
    margin-left: -8px;
  }

  .row > .bar:last-child {
    flex: 1 0 auto;
  }

  .second > .bar {
    padding-right: 2px;
  }

  .second > .bar:last-child {
    flex: none;
  }

  .gap {
    width: 91px;
  }

  .grip {
    width: 3px;
    height: 26px;
    margin: 0 1px 0 4px;
    background: repeating-linear-gradient(#aaa 0 2px, #fff 2px 5px);
  }

  .sep {
    width: 1px;
    height: 24px;
    margin: 0 3px 0 2px;
    background: #d4d4d4;
  }

  .tool {
    display: flex;
    align-items: center;
    padding: 0 4px 0 3px;
    color: #aaa;
  }

  .tool span {
    margin: 0 -4px 0 3px;
  }

  .drop {
    display: grid;
    place-items: center;
    width: 12px;
    height: 20px;
  }

  .foot {
    align-self: flex-end;
  }

  .overflow {
    display: flex;
    flex-direction: column;
    align-items: center;
    gap: 11px;
    width: 14px;
    margin-left: 26px;
  }

  footer .overflow {
    margin-left: 18px;
  }

  .chevrons {
    width: 9px;
    height: 7px;
    fill: none;
    stroke: #111;
    stroke-width: 1.3;
  }

  .selection {
    display: flex;
    align-items: center;
    height: 31px;
    border-bottom: 1px solid #8f8f8f;
  }

  .selection .sep {
    flex: none;
  }

  .selection .drop {
    width: 10px;
  }

  .combo {
    position: relative;
    flex: none;
  }

  .combo select {
    appearance: none;
    box-sizing: border-box;
    width: 100%;
    height: 20px;
    padding: 0 2px;
    border: 1px solid #999;
    border-radius: 0;
    background: #fff;
    color: #111;
    font: inherit;
    line-height: 18px;
    display: block;
  }

  .combo .caret {
    position: absolute;
    top: 8px;
    right: 5px;
  }

  .filter {
    width: 140px;
    margin: 0 7px 0 -49px;
  }

  .scope {
    width: 140px;
    margin-right: 4px;
  }

  .snap {
    display: grid;
    flex: none;
    place-items: center;
    box-sizing: border-box;
    width: 23px;
    height: 22px;
  }

  .snap.on {
    border: 1px solid #9fb8b4;
    background: #c5dbd7;
  }

  /* part navigator */
  main {
    display: flex;
    flex: 1;
    min-height: 0;
  }

  aside {
    display: flex;
    flex: none;
    flex-direction: column;
    width: 181px;
    border-right: 1px solid #a8a09a;
  }

  .title {
    display: flex;
    align-items: center;
    justify-content: space-between;
    height: 28px;
    padding-right: 16px;
  }

  .title h1 {
    margin: 0 0 0 -5px;
    font-size: 12px;
    font-weight: normal;
  }

  .title button {
    box-sizing: border-box;
    width: 12px;
    height: 11px;
    border: 1px solid #222;
    border-top-width: 2px;
  }

  .panel {
    display: flex;
    flex: 1;
    flex-direction: column;
    min-height: 0;
    margin-right: 9px;
    border: solid #ccc;
    border-width: 1px 1px 0 0;
  }

  .head {
    display: flex;
    align-items: center;
    gap: 17px;
    height: 22px;
    margin-right: 1px;
    border-bottom: 1px solid #ccc;
    background: #efefef;
  }

  .head svg {
    width: 9px;
    height: 5px;
  }

  .tree {
    flex: 1;
    margin: 0 1px 0 0;
    padding: 0;
    overflow: hidden;
    background: repeating-linear-gradient(
      #fff 0 19px,
      #e6e6e6 19px 20px,
      #fafafa 20px 39px,
      #e6e6e6 39px 40px
    );
    list-style: none;
    white-space: nowrap;
  }

  .root {
    position: relative;
    display: flex;
    align-items: center;
    gap: 3px;
    height: 20px;
    padding-left: 12px;
  }

  .root::before {
    content: '';
    position: absolute;
    top: 0;
    left: 2px;
    width: 8px;
    height: 10px;
    border: dotted #aaa;
    border-width: 0 0 1px 1px;
  }

  .root:not(.last)::after {
    content: '';
    position: absolute;
    top: 10px;
    left: 2px;
    height: 10px;
    border-left: 1px dotted #aaa;
  }

  .root:first-child::before {
    border-left: none;
  }

  /* expander box, the sign is drawn with two bars */
  .root i {
    position: absolute;
    top: 6px;
    left: -2px;
    z-index: 1;
    box-sizing: border-box;
    width: 9px;
    height: 9px;
    border: 1px solid #ccc;
    background: linear-gradient(#222, #222) center / 5px 1px no-repeat #fff;
  }

  .root i.plus {
    background:
      linear-gradient(#222, #222) center / 5px 1px no-repeat,
      linear-gradient(#222, #222) center / 1px 5px no-repeat,
      #fff;
  }

  .root .tiny + .tiny {
    margin-left: -3px;
  }

  .feature {
    position: relative;
    height: 20px;
    padding-left: 33px;
  }

  .feature::before {
    content: '';
    position: absolute;
    top: -10px;
    left: 21px;
    width: 9px;
    height: 20px;
    border: dotted #aaa;
    border-width: 0 0 1px 1px;
  }

  .feature label {
    display: flex;
    align-items: center;
    gap: 3px;
  }

  .feature .tiny {
    width: 15px;
    height: 15px;
  }

  .dim {
    color: #a8a8a8;
  }

  .bold {
    font-weight: bold;
  }

  .feature input {
    appearance: none;
    flex: none;
    box-sizing: border-box;
    width: 12px;
    height: 12px;
    margin: 0;
    border: 1px solid #111;
    background: #fff;
  }

  .feature input:checked::before {
    content: '';
    display: block;
    width: 10px;
    height: 10px;
    background: #1fae3a;
    clip-path: polygon(0 50%, 20% 35%, 40% 55%, 85% 0, 100% 20%, 42% 100%);
  }

  .scroll {
    display: flex;
    align-items: center;
    height: 15px;
    margin: 0 1px 3px 0;
    background: #f0f0f0;
  }

  .scroll span {
    width: 51px;
    height: 15px;
    background: #cdcdcd;
  }

  .scroll button {
    width: 10px;
  }

  .scroll button:last-child {
    margin-left: auto;
  }

  .scroll svg {
    width: 6px;
    height: 8px;
    fill: none;
    stroke: #333;
    stroke-width: 2;
  }

  .section {
    display: flex;
    align-items: center;
    justify-content: space-between;
    box-sizing: border-box;
    height: 24px;
    margin-right: 9px;
    padding-right: 6px;
    border-bottom: 2px solid #ccc;
    color: #2f83b0;
    font-size: 13px;
  }

  .panel + .section {
    height: 29px;
    border-top: 5px solid #d0d0d0;
  }

  .section:last-child {
    margin-bottom: 6px;
  }

  .section svg {
    width: 12px;
    height: 9px;
    fill: none;
    stroke: #2f83b0;
    stroke-width: 2;
  }

  /* graphics window */
  .viewport {
    position: relative;
    flex: 1;
    overflow: hidden;
    border: 1px solid #e3a066;
    border-width: 1px 0 1px 1px;
    background: linear-gradient(#b0b2b4, #cacccd 33%, #dcdde0 58%, #e5e6e8 76%, #e7e9ea);
  }

  .viewport text {
    font-size: 13px;
  }

  .part {
    position: absolute;
    top: 214px;
    left: 297px;
    width: 280px;
    height: 300px;
  }

  .triad {
    position: absolute;
    bottom: 20px;
    left: 45px;
    width: 50px;
    height: 60px;
  }

  .triad text {
    font-size: 11px;
  }
</style>
